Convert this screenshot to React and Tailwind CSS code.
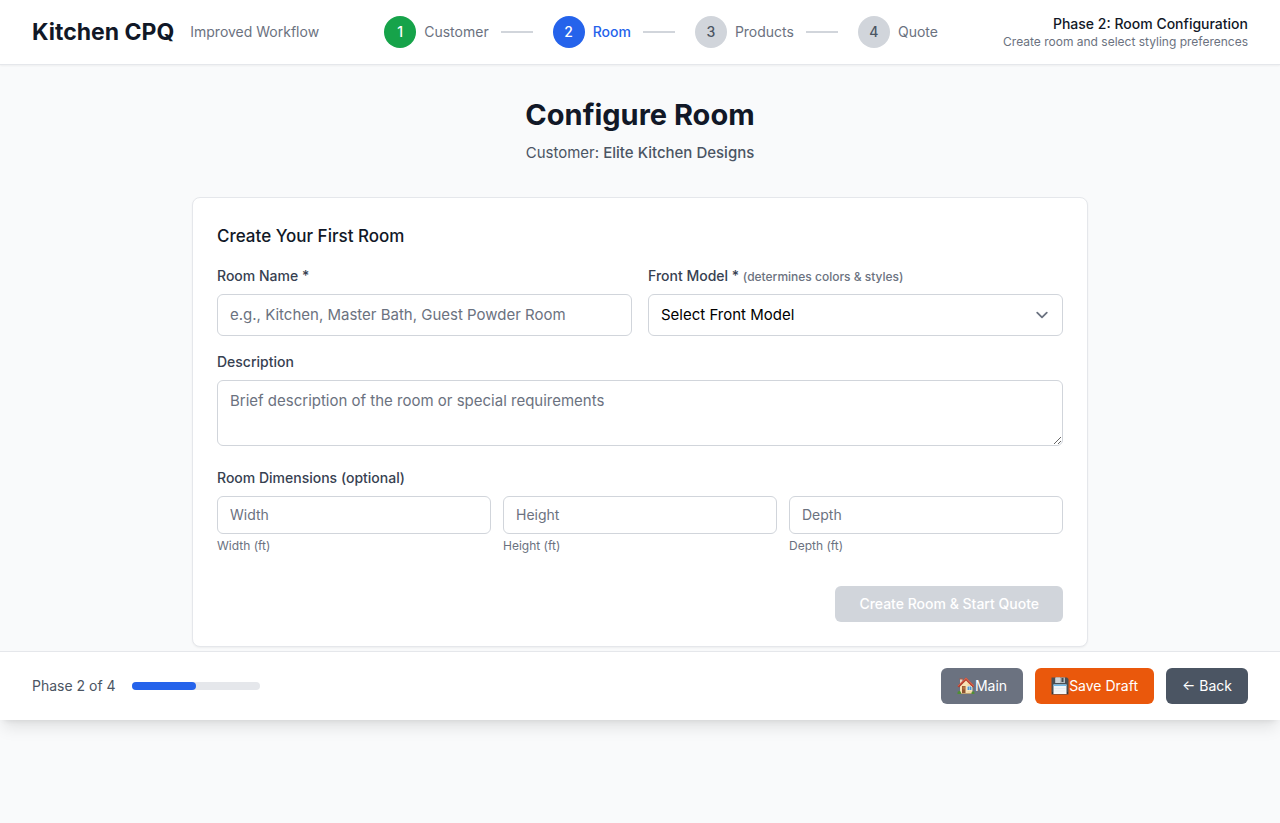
import React from "react";

const steps = [
  { label: "Customer", circle: "bg-[#16a34a] text-white", text: "text-[#6b7280]" },
  { label: "Room", circle: "bg-[#2563eb] text-white", text: "text-[#2563eb] font-medium" },
  { label: "Products", circle: "bg-[#d1d5db] text-[#4b5563]", text: "text-[#6b7280]" },
  { label: "Quote", circle: "bg-[#d1d5db] text-[#4b5563]", text: "text-[#6b7280]" },
];

const dimensions = ["Width", "Height", "Depth"];

function HouseIcon() {
  return (
    <svg viewBox="0 0 36 36" className="h-[18px] w-[18px] shrink-0" aria-hidden="true">
      <path d="M6 4h5v12H6z" fill="#e9dccb" />
      <path d="M5 3h7v2H5z" fill="#b5563c" />
      <path d="M6 17 18 5l13 13v15H6z" fill="#f3d9a6" />
      <path d="M6 17 18 5l3 3v25H6z" fill="#f8e2b4" />
      <path d="M18 1 34 17l-2 4L18 7 4 21l-3-3z" fill="#b23a2b" />
      <path d="M18 1 1 18l1 1L18 4l15 15 1-2z" fill="#d9654d" />
      <path d="M10 18h7v14h-7z" fill="#8f5430" />
      <path d="M11 19h5v6h-5z" fill="#b5713f" />
      <path d="M20 18h10v9H20z" fill="#fff4da" />
      <path d="M21 19h8v7h-8z" fill="#4d94cf" />
      <path d="M25 19v7" stroke="#dcecf5" />
      <path d="M5 32h26v2H5z" fill="#b99e72" />
      <path d="M1 34c-1-6 5-8 7-3v3zM29 34c-1-6 6-8 6-1v1z" fill="#4f8f34" />
    </svg>
  );
}

function FloppyIcon() {
  return (
    <svg viewBox="0 0 36 36" className="h-[18px] w-[18px] shrink-0" aria-hidden="true">
      <path d="M1 1h31l3 3v31H1z" fill="#4a4f54" />
      <path d="M8 1h20v11H8z" fill="#b4b9bd" />
      <path d="M10 1h8v11h-8z" fill="#cfd3d6" />
      <path d="M21 2h4v8h-4z" fill="#454b50" />
      <path d="M5 15h26v19H5z" fill="#f4f6f8" />
      <path d="M5 15h26v3H5z" fill="#6eb9e8" />
      <path d="M7 23h22M7 28h22" stroke="#dfe5ea" />
      <path d="M2 31h2v2H2zM32 31h2v2h-2z" fill="#202326" />
    </svg>
  );
}

function Header() {
  return (
    <header className="border-b border-[#e5e7eb] bg-white shadow-[0_1px_2px_0_rgba(0,0,0,0.05)]">
      <div className="flex min-h-16 items-center justify-between px-8">
        <div className="flex items-center gap-4">
          <h1 className="text-[23px] leading-8 font-bold">Kitchen CPQ</h1>
          <span className="text-sm text-[#6b7280]">Improved Workflow</span>
        </div>
        <ol className="flex items-center gap-5">
          {steps.map((step, i) => (
            <li key={step.label} className="flex items-center">
              <span className={`flex size-8 items-center justify-center rounded-full text-sm font-medium ${step.circle}`}>
                {i + 1}
              </span>
              <span className={`ml-2 text-sm ${step.text}`}>{step.label}</span>
              {i < steps.length - 1 && <span className="ml-3 h-0.5 w-8 bg-[#d1d5db]" />}
            </li>
          ))}
        </ol>
        <div className="text-right">
          <div className="text-sm font-medium">Phase 2: Room Configuration</div>
          <div className="text-xs text-[#6b7280]">Create room and select styling preferences</div>
        </div>
      </div>
    </header>
  );
}

function RoomForm() {
  const label = "mb-2 block text-sm font-medium text-[#374151]";
  const field = "block w-full rounded-md border border-[#d1d5db] bg-white px-3 py-2 placeholder:text-[#6b7280]";
  const large = "text-[15px] leading-6";
  return (
    <form
      className="rounded-lg border border-[#e5e7eb] bg-white p-6 shadow-[0_1px_2px_0_rgba(0,0,0,0.05)]"
      onSubmit={(e) => e.preventDefault()}
    >
      <h3 className="mb-4 text-[17px] leading-7 font-medium">Create Your First Room</h3>
      <div className="grid grid-cols-2 gap-4">
        <div>
          <label htmlFor="room-name" className={label}>Room Name *</label>
          <input id="room-name" type="text" className={`${field} ${large}`} placeholder="e.g., Kitchen, Master Bath, Guest Powder Room" />
        </div>
        <div>
          <label htmlFor="front-model" className={label}>
            Front Model * <span className="text-xs text-[#6b7280]">(determines colors &amp; styles)</span>
          </label>
          <div className="grid items-center">
            <select id="front-model" className={`${field} ${large} col-start-1 row-start-1 appearance-none text-black`}>
              <option>Select Front Model</option>
            </select>
            <svg
              viewBox="0 0 20 20"
              className="pointer-events-none col-start-1 row-start-1 mr-[9px] size-6 justify-self-end"
              fill="none"
              stroke="#6b7280"
              strokeWidth="1.5"
              strokeLinecap="round"
              strokeLinejoin="round"
              aria-hidden="true"
            >
              <path d="m6 8 4 4 4-4" />
            </svg>
          </div>
        </div>
      </div>
      <div className="mt-4">
        <label htmlFor="description" className={label}>Description</label>
        <textarea id="description" rows={2} className={`${field} ${large}`} placeholder="Brief description of the room or special requirements" />
      </div>
      <fieldset className="mt-[22px]">
        <legend className={label}>Room Dimensions (optional)</legend>
        <div className="grid grid-cols-3 gap-3">
          {dimensions.map((name) => (
            <div key={name}>
              <input id={name} type="number" className={`${field} text-sm`} placeholder={name} />
              <label htmlFor={name} className="mt-1 block text-xs text-[#6b7280]">{name} (ft)</label>
            </div>
          ))}
        </div>
      </fieldset>
      <div className="mt-8 flex justify-end">
        <button type="submit" disabled className="rounded-md bg-[#d1d5db] px-6 py-2 text-sm font-medium text-white">
          Create Room &amp; Start Quote
        </button>
      </div>
    </form>
  );
}

function Footer() {
  const button = "flex items-center rounded-md px-4 py-2 text-sm text-white";
  return (
    <footer className="mt-1 flex items-center justify-between border-t border-[#e5e7eb] bg-white px-8 py-4 shadow-[0_10px_15px_-3px_rgba(0,0,0,0.1),0_4px_6px_-4px_rgba(0,0,0,0.1)]">
      <div className="flex items-center gap-4">
        <span className="text-sm text-[#4b5563]">Phase 2 of 4</span>
        <div className="h-2 w-32 rounded-full bg-[#e5e7eb]">
          <div className="h-2 w-1/2 rounded-full bg-[#2563eb]" />
        </div>
      </div>
      <div className="flex gap-3">
        <button type="button" className={`${button} bg-[#6b7280]`}><HouseIcon />Main</button>
        <button type="button" className={`${button} bg-[#ea580c]`}><FloppyIcon />Save Draft</button>
        <button type="button" className={`${button} bg-[#4b5563]`}>← Back</button>
      </div>
    </footer>
  );
}

export default function App() {
  return (
    <div className="min-h-screen bg-[#f9fafb] font-['Inter','Liberation_Sans',sans-serif] text-[#111827]">
      <Header />
      <main className="mx-auto max-w-4xl pt-8">
        <div className="mb-8 text-center">
          <h2 className="mb-2 text-[29px] leading-9 font-bold">Configure Room</h2>
          <p className="text-[15px] leading-6 text-[#4b5563]">
            Customer: <span className="font-medium">Elite Kitchen Designs</span>
          </p>
        </div>
        <RoomForm />
      </main>
      <Footer />
    </div>
  );
}
